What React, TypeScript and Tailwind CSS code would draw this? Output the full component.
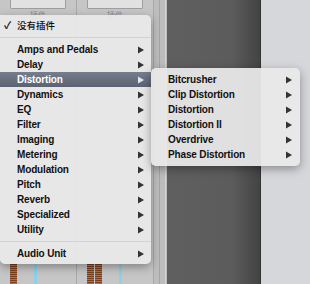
import React from "react";

const font = {
  fontFamily: '"Liberation Sans", "Noto Sans CJK SC", sans-serif',
};

const categories = [
  "Amps and Pedals",
  "Delay",
  "Distortion",
  "Dynamics",
  "EQ",
  "Filter",
  "Imaging",
  "Metering",
  "Modulation",
  "Pitch",
  "Reverb",
  "Specialized",
  "Utility",
];

const distortionPlugins = [
  "Bitcrusher",
  "Clip Distortion",
  "Distortion",
  "Distortion II",
  "Overdrive",
  "Phase Distortion",
];

function Arrow({ light }: { light?: boolean }) {
  return (
    <svg width="6" height="8" viewBox="0 0 6 8" className="shrink-0">
      <path d="M0 0.5 L6 4 L0 7.5 Z" fill={light ? "#e4e6ea" : "#333"} />
    </svg>
  );
}

function MenuRow({
  label,
  active,
  pad,
}: {
  label: string;
  active?: boolean;
  pad: string;
}) {
  return (
    <div
      className={`flex h-[15px] items-center justify-between ${pad} ${
        active
          ? "bg-gradient-to-b from-[#767d8d] to-[#5b6271] text-white"
          : "text-[#111]"
      }`}
    >
      <span className="text-[10px] font-bold leading-none tracking-[-0.15px]">
        {label}
      </span>
      <Arrow light={active} />
    </div>
  );
}

function ChannelStrip({ twoMeters }: { twoMeters?: boolean }) {
  return (
    <div className="flex h-full w-[77px] flex-col justify-between border-r border-[#a9a9a9] bg-[#c6c6c6]">
      <div className="px-[10px]">
        <div className="h-[9px] rounded-b-[2px] border border-t-0 border-[#9e9e9e] bg-[#e1e1e1]" />
        <div className="mt-[3px] text-center text-[8px] leading-none text-[#8a8a8a]">
          插件
        </div>
      </div>
      <div className="flex h-[20px] items-stretch gap-[17px] pl-[10px]">
        <div className="flex gap-[1px]">
          <div className="w-[7px] bg-[repeating-linear-gradient(180deg,#7a3f1d_0px,#7a3f1d_1px,#b5703f_1px,#b5703f_2px)]" />
          {twoMeters && (
            <div className="w-[7px] bg-[repeating-linear-gradient(180deg,#7a3f1d_0px,#7a3f1d_1px,#b5703f_1px,#b5703f_2px)]" />
          )}
        </div>
        <div className="w-[3px] bg-[#8fd0ea]" />
      </div>
    </div>
  );
}

export default function App() {
  return (
    <div className="relative h-[284px] w-[310px] overflow-hidden" style={font}>
      {/* mixer behind the menus */}
      <div className="flex h-full">
        <ChannelStrip />
        <ChannelStrip twoMeters />
        <div className="flex h-full w-[13px] bg-[#bdbdbd]">
          <div className="ml-[5px] w-[1px] bg-[#a5a5a5]" />
          <div className="ml-[5px] w-[1px] bg-[#d2d2d2]" />
        </div>
        <div className="h-full w-[94px] border-r border-[#333] bg-gradient-to-r from-[#5f5f5f] via-[#5c5c5c] via-70% to-[#434343]" />
        <div className="h-full flex-1 bg-[#d6d7db]" />
      </div>

      {/* main plug-in menu */}
      <div className="absolute left-0 top-[15px] w-[151px] rounded-r-[5px] rounded-bl-[5px] bg-[#e9e9e9]/[0.94] py-[3px] shadow-[0_3px_10px_rgba(0,0,0,0.35)]">
        <div className="flex h-[15px] items-center pl-[4px] text-[#111]">
          <span className="w-[13px] text-[10px] font-bold leading-none">✓</span>
          <span className="text-[9.5px] font-medium leading-none">没有插件</span>
        </div>
        <div className="my-[4px] h-[1px] bg-[#d3d3d3]" />
        {categories.map((c) => (
          <MenuRow
            key={c}
            label={c}
            active={c === "Distortion"}
            pad="pl-[17px] pr-[7px]"
          />
        ))}
        <div className="my-[4px] h-[1px] bg-[#d3d3d3]" />
        <MenuRow label="Audio Unit" pad="pl-[17px] pr-[7px]" />
      </div>

      {/* distortion submenu */}
      <div className="absolute left-[151px] top-[68px] w-[149px] rounded-[5px] bg-[#e9e9e9]/[0.94] py-[4px] shadow-[0_3px_10px_rgba(0,0,0,0.35)]">
        {distortionPlugins.map((p) => (
          <MenuRow key={p} label={p} pad="pl-[17px] pr-[8px]" />
        ))}
      </div>
    </div>
  );
}
